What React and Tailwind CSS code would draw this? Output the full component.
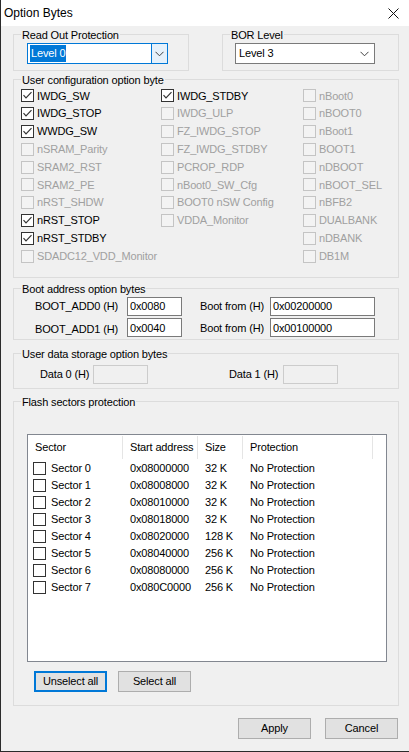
import React from "react";

const CheckBox = ({ checked, disabled }) => (
  <span
    className={
      "flex w-[13px] h-[13px] shrink-0 items-center justify-center border " +
      (disabled ? "border-[#c4c4c4] bg-[#f3f3f3]" : "border-[#333333] bg-white")
    }
  >
    {checked && (
      <svg width="11" height="11" viewBox="0 0 11 11">
        <polyline points="1.5,5.2 4,7.8 9.5,2.2" fill="none" stroke="#333333" strokeWidth="1.2" />
      </svg>
    )}
  </span>
);

const Chevron = () => (
  <svg width="9" height="6" viewBox="0 0 9 6">
    <polyline points="0.5,0.8 4.5,4.8 8.5,0.8" fill="none" stroke="#404040" strokeWidth="1" />
  </svg>
);

const Group = ({ label, className, children }) => (
  <div className={"relative border border-[#dcdcdc] " + className}>
    <span className="absolute left-[7px] top-[-6px] bg-[#f0f0f0] px-[1px] leading-[12px] text-black">
      {label}
    </span>
    {children}
  </div>
);

const col1 = [
  ["IWDG_SW", true, false],
  ["IWDG_STOP", true, false],
  ["WWDG_SW", true, false],
  ["nSRAM_Parity", false, true],
  ["SRAM2_RST", false, true],
  ["SRAM2_PE", false, true],
  ["nRST_SHDW", false, true],
  ["nRST_STOP", true, false],
  ["nRST_STDBY", true, false],
  ["SDADC12_VDD_Monitor", false, true],
];
const col2 = [
  ["IWDG_STDBY", true, false],
  ["IWDG_ULP", false, true],
  ["FZ_IWDG_STOP", false, true],
  ["FZ_IWDG_STDBY", false, true],
  ["PCROP_RDP", false, true],
  ["nBoot0_SW_Cfg", false, true],
  ["BOOT0 nSW Config", false, true],
  ["VDDA_Monitor", false, true],
];
const col3 = [
  "nBoot0",
  "nBOOT0",
  "nBoot1",
  "BOOT1",
  "nDBOOT",
  "nBOOT_SEL",
  "nBFB2",
  "DUALBANK",
  "nDBANK",
  "DB1M",
].map((n) => [n, false, true]);

const OptCol = ({ items, className }) => (
  <div className={"flex flex-col " + (className || "")}>
    {items.map(([name, checked, disabled]) => (
      <div key={name} className="flex h-[17.8px] items-center gap-[3px]">
        <CheckBox checked={checked} disabled={disabled} />
        <span className={disabled ? "text-[#a0a0a0]" : "text-black"}>{name}</span>
      </div>
    ))}
  </div>
);

const sectors = [
  ["Sector 0", "0x08000000", "32 K"],
  ["Sector 1", "0x08008000", "32 K"],
  ["Sector 2", "0x08010000", "32 K"],
  ["Sector 3", "0x08018000", "32 K"],
  ["Sector 4", "0x08020000", "128 K"],
  ["Sector 5", "0x08040000", "256 K"],
  ["Sector 6", "0x08080000", "256 K"],
  ["Sector 7", "0x080C0000", "256 K"],
];

const TextBox = ({ value, className, disabled }) => (
  <div
    className={
      "flex h-[19px] items-center border pl-[2px] " +
      (disabled ? "border-[#cccccc] bg-[#f0f0f0]" : "border-[#7a7a7a] bg-white") +
      " " +
      className
    }
  >
    {value}
  </div>
);

const Button = ({ children, focused, className }) => (
  <div
    className={
      "flex h-[21px] w-[73px] items-center justify-center bg-[#e1e1e1] text-black " +
      (focused ? "border-2 border-[#0078d7]" : "border border-[#adadad]") +
      " " +
      (className || "")
    }
  >
    {children}
  </div>
);

export default function App() {
  return (
    <div className="flex h-[752px] w-[409px] flex-col border-b border-l border-[#2b2b2b] bg-[#f0f0f0] font-['Liberation_Sans',Arial,sans-serif] text-[11px] tracking-[-0.15px] text-black">
      {/* title bar */}
      <div className="flex h-[26px] shrink-0 items-center justify-between bg-white pl-[3px] pr-[10px]">
        <span className="text-[12px] tracking-normal text-black">Option Bytes</span>
        <svg width="11" height="11" viewBox="0 0 11 11">
          <line x1="0.5" y1="0.5" x2="10.5" y2="10.5" stroke="#111" strokeWidth="1" />
          <line x1="10.5" y1="0.5" x2="0.5" y2="10.5" stroke="#111" strokeWidth="1" />
        </svg>
      </div>

      <div className="flex flex-col pl-[12px] pr-[10px]">
        {/* row 1 */}
        <div className="mt-[8px] flex">
          <Group label="Read Out Protection" className="h-[37px] w-[176px] pl-[13px] pt-[8px]">
            <div className="flex h-[21px] w-[141px] border border-[#0078d7] bg-white">
              <div className="flex flex-1 items-center pl-[2px]">
                <span className="flex h-[17px] items-center bg-[#0078d7] px-[1px] text-white">Level 0</span>
              </div>
              <div className="flex w-[16px] items-center justify-center border-l border-[#0078d7] bg-[#e5f1fb]">
                <Chevron />
              </div>
            </div>
          </Group>
          <Group label="BOR Level" className="ml-auto h-[37px] w-[177px] pl-[12px] pt-[8px]">
            <div className="flex h-[21px] w-[140px] items-center justify-between border border-[#7a7a7a] bg-white pl-[3px] pr-[5px]">
              <span>Level 3</span>
              <Chevron />
            </div>
          </Group>
        </div>

        {/* user configuration */}
        <Group label="User configuration option byte" className="mt-[8px] flex h-[199px] pl-[7px] pt-[7px]">
          <OptCol items={col1} className="w-[140px]" />
          <OptCol items={col2} className="w-[142px]" />
          <OptCol items={col3} />
        </Group>

        {/* boot address */}
        <Group label="Boot address option bytes" className="mt-[10px] flex h-[52px] flex-col gap-[2px] pl-[21px] pt-[8px]">
          <div className="flex items-center">
            <span className="w-[92px]">BOOT_ADD0 (H)</span>
            <TextBox value="0x0080" className="w-[55px]" />
            <span className="ml-[18px] w-[70px]">Boot from (H)</span>
            <TextBox value="0x00200000" className="w-[105px]" />
          </div>
          <div className="flex items-center">
            <span className="w-[92px] pt-[3px]">BOOT_ADD1 (H)</span>
            <TextBox value="0x0040" className="w-[55px]" />
            <span className="ml-[18px] w-[70px]">Boot from (H)</span>
            <TextBox value="0x00100000" className="w-[105px]" />
          </div>
        </Group>

        {/* user data storage */}
        <Group label="User data storage option bytes" className="mt-[13px] flex h-[36px] items-start pl-[26px] pt-[11px]">
          <div className="flex items-center">
            <span className="w-[53px]">Data 0 (H)</span>
            <TextBox value="" disabled className="w-[55px]" />
          </div>
          <div className="ml-[81px] flex items-center">
            <span className="w-[54px]">Data 1 (H)</span>
            <TextBox value="" disabled className="w-[55px]" />
          </div>
        </Group>

        {/* flash sectors */}
        <Group label="Flash sectors protection" className="mt-[12px] flex h-[305px] flex-col pl-[13px] pt-[32px]">
          <div className="flex h-[228px] w-[360px] flex-col border border-[#828790] bg-white">
            <div className="flex h-[25px] items-start pt-[1px]">
              <div className="flex h-[23px] w-[95px] items-center border-r border-[#e5e5e5] pl-[7px]">Sector</div>
              <div className="flex h-[23px] w-[75px] items-center border-r border-[#e5e5e5] pl-[7px]">Start address</div>
              <div className="flex h-[23px] w-[45px] items-center border-r border-[#e5e5e5] pl-[7px]">Size</div>
              <div className="flex h-[23px] w-[130px] items-center border-r border-[#e5e5e5] pl-[7px]">Protection</div>
            </div>
            {sectors.map(([name, addr, size]) => (
              <div key={name} className="flex h-[17px] items-center">
                <div className="flex w-[95px] items-center gap-[5px] pl-[5px]">
                  <CheckBox />
                  <span>{name}</span>
                </div>
                <div className="w-[75px] pl-[7px]">{addr}</div>
                <div className="w-[45px] pl-[7px]">{size}</div>
                <div className="w-[130px] pl-[7px]">No Protection</div>
              </div>
            ))}
          </div>
          <div className="mt-[9px] flex gap-[11px] pl-[7px]">
            <Button focused>Unselect all</Button>
            <Button>Select all</Button>
          </div>
        </Group>

        {/* bottom buttons */}
        <div className="mr-[1px] mt-[12px] flex justify-end gap-[14px]">
          <Button>Apply</Button>
          <Button>Cancel</Button>
        </div>
      </div>
    </div>
  );
}
